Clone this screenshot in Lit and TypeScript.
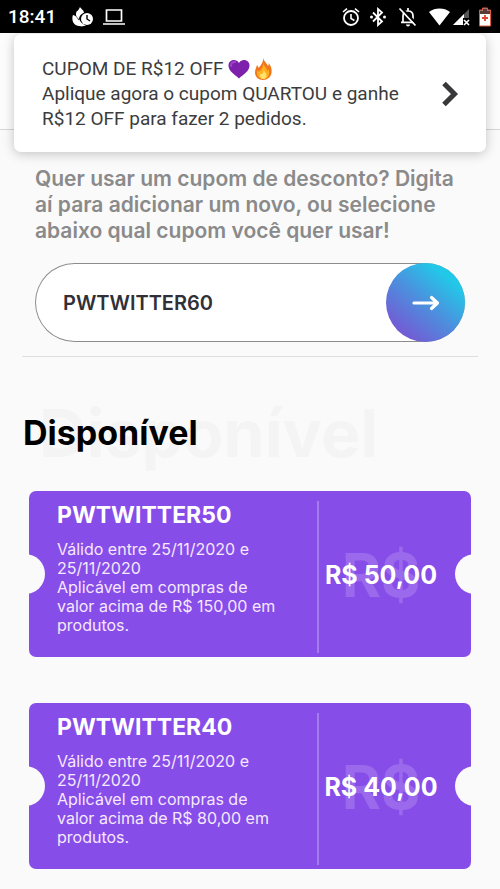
import { LitElement, html, css } from "lit";
import { customElement, property, state } from "lit/decorators.js";

interface Coupon {
  code: string;
  validity: string;
  rule: string;
  value: string;
}

const coupons: Coupon[] = [
  {
    code: "PWTWITTER50",
    validity: "Válido entre 25/11/2020 e 25/11/2020",
    rule: "Aplicável em compras de valor acima de R$ 150,00 em produtos.",
    value: "R$ 50,00",
  },
  {
    code: "PWTWITTER40",
    validity: "Válido entre 25/11/2020 e 25/11/2020",
    rule: "Aplicável em compras de valor acima de R$ 80,00 em produtos.",
    value: "R$ 40,00",
  },
];

@customElement("status-bar")
export class StatusBar extends LitElement {
  static styles = css`
    :host {
      display: flex;
      align-items: center;
      height: 33px;
      padding: 0 8px;
      background: #000;
      color: #fff;
      font: 500 19px/33px Roboto, sans-serif;
    }
    .icons {
      display: flex;
      align-items: center;
      gap: 9px;
      margin-left: 16px;
    }
    .right {
      gap: 8px;
      margin-left: auto;
    }
    .signal {
      display: flex;
      align-items: center;
      gap: 3px;
    }
    svg {
      display: block;
    }
  `;

  render() {
    return html`
      <time>18:41</time>
      <div class="icons">
        <svg width="22" height="20" viewBox="0 0 22 20" aria-hidden="true">
          <path
            fill="#fff"
            d="M8 0c1 2 4 3 4 6-3 1-5 3-5 6C4 10 3 7 5 4c1 0 2-2 3-4zM1 8c2 0 4 2 6 6 0 2 1 4 4 5-6 1-10-2-10.500-6C.3 11 .4 9 1 8z"
          />
          <circle cx="15" cy="12" r="7" fill="#000" />
          <circle cx="15" cy="12" r="6" fill="#fff" />
          <path d="M15 8v4l3 2" fill="none" stroke="#000" stroke-width="1.4" />
          <path d="M7 12c2 4 4 5 7 6.500-4 1.500-8 .5-9-2z" fill="#fff" />
        </svg>
        <svg width="22" height="18" viewBox="0 0 22 18" aria-hidden="true">
          <path d="M3.5 2h15v11h-15zM0 16h22" fill="none" stroke="#fff" stroke-width="1.7" />
        </svg>
      </div>
      <div class="icons right">
        <svg width="20" height="20" viewBox="0 0 20 20" aria-hidden="true">
          <circle cx="10" cy="11" r="7" fill="none" stroke="#fff" stroke-width="1.8" />
          <path d="M2 5l4-3.4M18 5l-4-3.4M10 7v4.500l3.400 2" fill="none" stroke="#fff" stroke-width="1.6" />
        </svg>
        <svg width="18" height="20" viewBox="0 0 18 20" aria-hidden="true">
          <path d="M4 5.500l9 9L9 18V2l4 3.500-9 9" fill="none" stroke="#fff" stroke-width="1.8" />
          <circle cx="2.500" cy="10" r="1.500" fill="#fff" />
          <circle cx="15.500" cy="10" r="1.500" fill="#fff" />
        </svg>
        <svg width="26" height="20" viewBox="1 0 26 20" aria-hidden="true">
          <path d="M9 15V9c0-3 2-5 5-5s5 2 5 5v6M7 15.400h14M14 1v3" fill="none" stroke="#fff" stroke-width="1.7" />
          <path d="M12 17.500h4a2 2 0 0 1-4 0z" fill="#fff" />
          <path d="M7.500 1l16 17" stroke="#000" stroke-width="2.500" />
          <path d="M5.500 1.500l16 17" stroke="#fff" stroke-width="1.8" />
        </svg>
        <div class="signal">
          <svg width="21" height="18" viewBox="0 0 21 18" aria-hidden="true">
            <path d="M0 4C6-.6 15-.6 21 4L10.500 17.500z" fill="#fff" />
          </svg>
          <svg width="17" height="18" viewBox="0 0 17 18" aria-hidden="true">
            <path d="M16 1v16H0z" fill="#555" />
            <path d="M11 6v11H0z" fill="#fff" />
            <path d="M10 10h7v8h-7z" fill="#000" />
            <path d="M11 12l5 5M16 12l-5 5" stroke="#fff" stroke-width="1.6" />
          </svg>
        </div>
        <svg width="14" height="20" viewBox="0 0 14 20" aria-hidden="true">
          <path d="M4.500 1h5v2h3v16h-11V3h3z" fill="#fff" stroke="#e0573f" stroke-width="1" />
          <path d="M5 1.500h4v2h3v3.500H2V3.500h3z" fill="#5c3b36" />
          <path d="M7 8v6M4 11h6" stroke="#e5452f" stroke-width="1.8" />
        </svg>
      </div>
    `;
  }
}

@customElement("promo-notice")
export class PromoNotice extends LitElement {
  static styles = css`
    :host {
      display: block;
    }
    .card {
      box-sizing: border-box;
      display: flex;
      align-items: center;
      justify-content: space-between;
      width: 100%;
      padding: 22px 27px 21px 28px;
      border: 0;
      border-radius: 7px;
      background: #fff;
      box-shadow: 0 2px 12px rgba(0, 0, 0, 0.22);
      color: #3c3c3e;
      font: 400 19px/25px Roboto, sans-serif;
      text-align: left;
      cursor: pointer;
    }
    .title {
      display: flex;
      align-items: center;
      gap: 4px;
    }
    .line {
      display: block;
    }
    svg {
      display: block;
      flex: none;
    }
  `;

  render() {
    return html`
      <button class="card" type="button">
        <span>
          <span class="title">
            CUPOM DE R$12 OFF
            <svg width="22" height="20" viewBox="0 0 22 20" role="img" aria-label="coração roxo">
              <path
                d="M11 19.500C7 16 0 12 .5 6 1 1 8-1 11 4c3-5 10-3 10.500 2 .5 6-6.500 10-10.500 13.500z"
                fill="#7d20ac"
              />
              <path d="M3 7c0-3 2-4.500 4-4" fill="none" stroke="#9c45c8" stroke-width="2" stroke-linecap="round" />
            </svg>
            <svg width="20" height="22" viewBox="3 0 20 22" role="img" aria-label="fogo">
              <path
                d="M12 0c.5 3 4 5 5 8 .8-.8.8-2 .5-3 3 3 3.500 7 3 10-.7 4-4 7-8.500 7S4 19 4 14.500C4 11 5.500 9.500 6 7c1 1 1.500 2 1.500 3C10 7.500 12.500 4 12 0z"
                fill="#f0761c"
              />
              <path
                d="M12.500 5c0 3 3 4.500 4 8 .7-.4 1-1.200 1-2 1.500 4 .5 10-5 10-4 0-6.500-3-6.500-6 0-1 .2-2 .6-3 .6.5 1 1 1.400 1.800C10 12 12.500 9 12.500 5z"
                fill="#ffae1f"
              />
              <path d="M12.500 12c1 2 3 3 3 5.500 0 2-1.300 3.500-3.200 3.500S9 19.500 9 17.500c0-1 .4-1.500.8-2l1 1c1-1 1.700-2.500 1.700-4.500z" fill="#ffe36b" />
            </svg>
          </span>
          <span class="line">Aplique agora o cupom QUARTOU e ganhe</span>
          <span class="line">R$12 OFF para fazer 2 pedidos.</span>
        </span>
        <svg width="18" height="28" viewBox="0 0 18 28" aria-hidden="true">
          <path d="M3 3.500L13.500 14 3 24.500" fill="none" stroke="#38383a" stroke-width="5" />
        </svg>
      </button>
    `;
  }
}

@customElement("coupon-ticket")
export class CouponTicket extends LitElement {
  @property({ attribute: false }) coupon!: Coupon;

  static styles = css`
    :host {
      display: block;
    }
    .ticket {
      position: relative;
      display: grid;
      grid-template-columns: 228px 1fr;
      box-sizing: border-box;
      min-height: 166px;
      padding: 10px 28px 4px;
      column-gap: 32px;
      border-radius: 7px;
      overflow: hidden;
      background: #874de8;
      color: #fff;
    }
    .ticket::before,
    .ticket::after {
      content: "";
      position: absolute;
      top: 50%;
      width: 40px;
      height: 40px;
      margin-top: -20px;
      border-radius: 50%;
      background: #fafafa;
    }
    .ticket::before {
      left: -24px;
    }
    .ticket::after {
      right: -24px;
    }
    h3 {
      margin: 0 0 11px;
      font: 700 23px/28px Inter, sans-serif;
    }
    p {
      margin: 0;
      font: 400 16px/19px Inter, sans-serif;
      color: #f6e8ff;
    }
    .value {
      display: grid;
      align-items: center;
      justify-items: center;
      padding-bottom: 4px;
      border-left: 2px solid #a67bee;
      font: 700 25px/32px Inter, sans-serif;
      white-space: nowrap;
    }
    .value > * {
      grid-area: 1 / 1;
    }
    .ghost {
      color: #9a69ec;
      font-size: 60px;
      line-height: 60px;
    }
    .amount {
      position: relative;
    }
  `;

  render() {
    const c = this.coupon;
    return html`
      <article class="ticket">
        <div>
          <h3>${c.code}</h3>
          <p>${c.validity}</p>
          <p>${c.rule}</p>
        </div>
        <div class="value">
          <span class="ghost" aria-hidden="true">R$</span>
          <span class="amount">${c.value}</span>
        </div>
      </article>
    `;
  }
}

@customElement("app-root")
export class AppRoot extends LitElement {
  @state() private code = "PWTWITTER60";

  static styles = css`
    :host {
      display: block;
      position: relative;
      min-height: 100vh;
      background: #fafafa;
      font-family: Inter, sans-serif;
    }
    .notice {
      position: absolute;
      top: 34px;
      left: 14px;
      right: 14px;
      z-index: 1;
    }
    status-bar {
      position: relative;
      z-index: 2;
    }
    header {
      height: 96px;
      border-bottom: 1px solid #d6d6d6;
      background: #fcfcfc;
    }
    .add {
      margin: 0 22px;
      padding: 36px 13px 14px;
      border-bottom: 1px solid #dedede;
    }
    label {
      display: block;
      color: #8a8a8a;
      font-weight: 600;
      font-size: 21px;
      line-height: 26px;
    }
    .field {
      display: flex;
      box-sizing: border-box;
      height: 79px;
      margin-top: 19px;
      border-radius: 40px;
      background: #fff;
      box-shadow: inset 0 0 0 1px #8c8c8c;
    }
    input {
      flex: 1;
      min-width: 0;
      padding: 0 28px;
      border: 0;
      outline: 0;
      background: none;
      color: #303036;
      font: 600 20px/26px Inter, sans-serif;
    }
    .go {
      display: grid;
      place-items: center;
      width: 79px;
      height: 79px;
      padding: 0;
      border: 0;
      border-radius: 50%;
      background: linear-gradient(40deg, #7b50d2 8%, #4b91de 50%, #22c8e8 80%);
      cursor: pointer;
    }
    .available {
      padding: 0 29px 20px;
    }
    .heading {
      display: grid;
      align-items: center;
      margin: 34px -6px 16px;
      height: 84px;
    }
    .heading > * {
      grid-area: 1 / 1;
    }
    .shadow {
      padding-left: 16px;
      color: #f4f4f4;
      font-weight: 700;
      font-size: 66px;
      line-height: 84px;
    }
    h2 {
      margin: 0;
      color: #000;
      font-weight: 700;
      font-size: 34px;
      line-height: 40px;
    }
    .list {
      display: grid;
      gap: 46px;
    }
  `;

  private onInput(e: Event) {
    this.code = (e.target as HTMLInputElement).value;
  }

  render() {
    return html`
      <status-bar></status-bar>
      <promo-notice class="notice"></promo-notice>
      <header></header>
      <main>
        <form class="add" @submit=${(e: Event) => e.preventDefault()}>
          <label for="code">
            Quer usar um cupom de desconto? Digita aí para adicionar um novo, ou selecione abaixo qual cupom você quer usar!
          </label>
          <div class="field">
            <input id="code" type="text" .value=${this.code} @input=${this.onInput} />
            <button class="go" type="submit" aria-label="Adicionar cupom">
              <svg width="28" height="16" viewBox="0 0 28 16" aria-hidden="true">
                <path
                  d="M2 8h23M19.500 2.500L25.500 8l-6 5.500"
                  fill="none"
                  stroke="#fff"
                  stroke-width="3.200"
                  stroke-linecap="round"
                  stroke-linejoin="round"
                />
              </svg>
            </button>
          </div>
        </form>
        <section class="available">
          <div class="heading">
            <span class="shadow" aria-hidden="true">Disponível</span>
            <h2>Disponível</h2>
          </div>
          <div class="list">
            ${coupons.map((c) => html`<coupon-ticket .coupon=${c}></coupon-ticket>`)}
          </div>
        </section>
      </main>
    `;
  }
}
